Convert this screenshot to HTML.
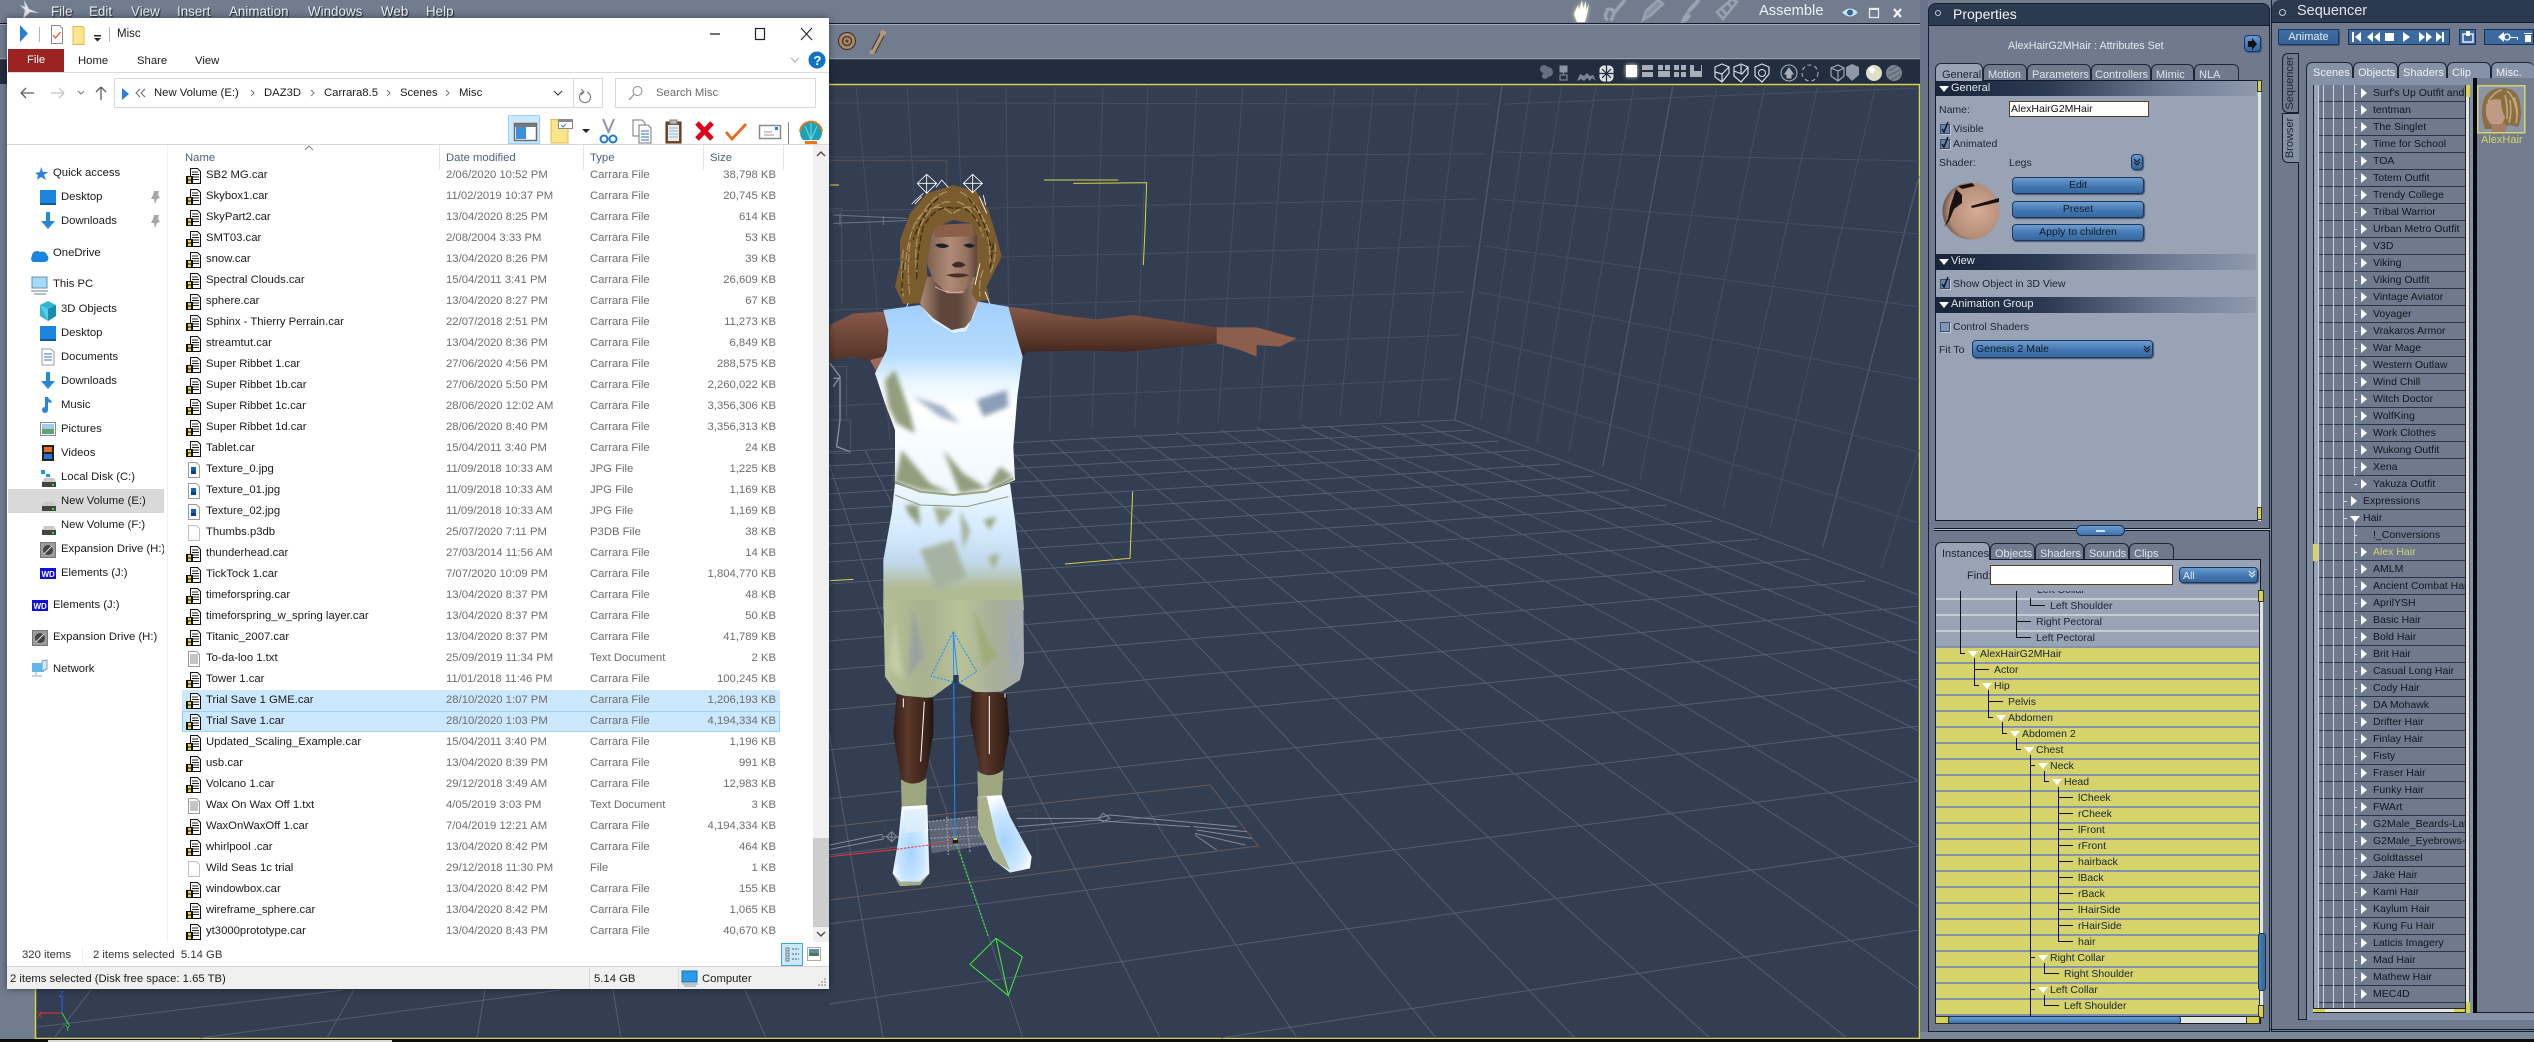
<!DOCTYPE html>
<html><head><meta charset="utf-8"><title>Carrara</title>
<style>
*{box-sizing:border-box}
html,body{margin:0;padding:0;overflow:hidden;width:2534px;height:1042px}
body{position:relative;background:#717c8f;font-family:"Liberation Sans",sans-serif;font-size:10.5px;color:#1c2431}
#root{position:absolute;left:0;top:0;width:2534px;height:1042px;overflow:hidden}
.a{position:absolute}
.t{position:absolute;white-space:nowrap;line-height:14px}
.m{color:#eef1f5;font-size:13.4px;top:5px;text-shadow:1px 1px 1px #1c2431}
.win{position:absolute;left:7px;top:18px;width:822px;height:971px;background:#fff;box-shadow:0 0 7px rgba(0,0,0,.45)}
.e{position:absolute;white-space:nowrap;line-height:14px;font-size:11.3px;color:#1a1a1a}
.h{color:#4c607a;top:151px}
.g{color:#6d6d6d}
.nav{left:61px}.top{left:53px}
.list{position:absolute;left:182px;top:165px;width:598px;height:777px;overflow:hidden}
.r{position:relative;height:21px;line-height:21px;font-size:11.3px;white-space:nowrap;color:#1a1a1a}
.r svg{position:absolute;left:4px;top:3px}
.r span{position:absolute}
.r span:nth-of-type(1){left:24px}
.r span:nth-of-type(2){left:264px;color:#6d6d6d}
.r span:nth-of-type(3){left:408px;color:#6d6d6d}
.r span:nth-of-type(4){right:4px;color:#6d6d6d}
.s{background:#cce8ff}
.sb{background:#cce8ff;box-shadow:inset 0 0 0 1px #99d1ff}
.tab{position:absolute;border:1px solid #1b2738;border-bottom:0;border-radius:6px 6px 0 0;color:#dde2ea;line-height:20px;padding-left:6px;background:#6f7a8e;font-size:11px;white-space:nowrap;overflow:hidden}
.tab.on{background:#98a3b6;color:#1c2431;z-index:2;line-height:22px}
.sec{position:absolute;left:1936px;width:320px;background:linear-gradient(90deg,#17243a,#2c3a52 35%,#6e7b92 72%,#8e99ad);color:#e4e8ee;line-height:15px;padding-left:15px;font-size:11px}
.sec:before{content:"";position:absolute;left:3px;top:5px;border:5px solid transparent;border-top:6px solid #fff;border-bottom:0}
.btn{position:absolute;background:linear-gradient(#6c9dcf,#4478b2 55%,#38679e);border:1px solid #1a3760;border-radius:4px;box-shadow:1px 1px 1px #46536a;text-align:center;color:#111a28;font-size:10.5px}
.cb{position:absolute;width:10px;height:10px;background:#6483ad;border:1px solid #3a4c68;box-shadow:1px 1px 0 #c3cad6}
.p{height:16px;border-top:2px solid #c4ccd8;background:#98a3b6;line-height:12px;white-space:nowrap;font-size:10.5px;color:#1c2431}
.y{background:#d6d36b;border-top:2px solid #8592ae}
.q{position:relative;height:17px;border-bottom:1px solid #2b3547;line-height:17px;padding-left:55px;white-space:nowrap;overflow:hidden;background:#6f7a8e;color:#10161f;font-size:10.5px}
.q:before{content:"";position:absolute;left:43px;top:3px;border:5px solid transparent;border-left:6px solid #fff;border-right:0}
.q:after{content:"";position:absolute;left:36px;top:8px;width:3px;height:1px;background:#d6dbe3}
.q.x{padding-left:45px}.q.x:before{left:33px}.q.x:after{left:26px}
.q.d:before{left:32px;top:6px;border:5px solid transparent;border-top:6px solid #fff;border-bottom:0}
.q.x.d{padding-left:45px}
.q.n:before{display:none}
.q.c{color:#d6d36b}
</style></head>
<body><div id="root">
<!-- App chrome -->
<div class="a" style="left:0;top:23px;width:1928px;height:1px;background:#121a28"></div>
<div class="a" style="left:0;top:24px;width:1928px;height:1px;background:#a3acbb"></div>
<div class="a" style="left:0;top:58px;width:1928px;height:2px;background:linear-gradient(#c1c8d3,#121a28)"></div>
<div class="a" style="left:0;top:60px;width:1920px;height:24px;background:#222d40"></div>
<svg class="a" style="left:18px;top:0" width="24" height="20"><path d="M6 0l5 9 10 4-9-1-7 7 2-9-5-5 5 2z" fill="#dfe4ea"/></svg>
<span class="t m" style="left:51px">File</span><span class="t m" style="left:89px">Edit</span><span class="t m" style="left:131px">View</span><span class="t m" style="left:177px">Insert</span><span class="t m" style="left:229px">Animation</span><span class="t m" style="left:308px">Windows</span><span class="t m" style="left:381px">Web</span><span class="t m" style="left:426px">Help</span>

<!-- Viewport and figure -->
<svg class="a" style="left:0;top:0" width="2534" height="1042" viewBox="0 0 2534 1042">
<defs>
<linearGradient id="shirt" x1="0" y1="0" x2="0" y2="1"><stop offset="0" stop-color="#a0cffb"/><stop offset=".28" stop-color="#b7dcfd"/><stop offset=".42" stop-color="#eaf6ff"/><stop offset=".55" stop-color="#fff"/><stop offset="1" stop-color="#eef7ff"/></linearGradient>
<linearGradient id="sh1" x1="0" y1="0" x2="0" y2="1"><stop offset="0" stop-color="#eef8ff"/><stop offset=".35" stop-color="#d7ecff"/><stop offset=".62" stop-color="#c2d9ec"/><stop offset=".82" stop-color="#b0bb96"/><stop offset="1" stop-color="#b1bc92"/></linearGradient>
<linearGradient id="sh2" x1="0" y1="0" x2="1" y2="0"><stop offset="0" stop-color="#b5bf95"/><stop offset=".3" stop-color="#a8b18f"/><stop offset=".55" stop-color="#b9c297"/><stop offset=".8" stop-color="#a9ae98"/><stop offset="1" stop-color="#a5acae"/></linearGradient>
<linearGradient id="arm" x1="0" y1="0" x2="0" y2="1"><stop offset="0" stop-color="#87594a"/><stop offset=".6" stop-color="#5f3b2d"/><stop offset="1" stop-color="#3c2219"/></linearGradient>
<linearGradient id="leg" x1="0" y1="0" x2="1" y2="0"><stop offset="0" stop-color="#2f1b14"/><stop offset=".35" stop-color="#5a382a"/><stop offset=".8" stop-color="#3c2419"/><stop offset="1" stop-color="#221410"/></linearGradient>
<linearGradient id="neck" x1="0" y1="0" x2="1" y2="0"><stop offset="0" stop-color="#b08c78"/><stop offset=".35" stop-color="#5d463c"/><stop offset=".65" stop-color="#5f473c"/><stop offset="1" stop-color="#a88876"/></linearGradient>
<linearGradient id="face" x1="0" y1="0" x2="1" y2="0"><stop offset="0" stop-color="#7d5e50"/><stop offset=".45" stop-color="#b08c78"/><stop offset=".8" stop-color="#94705e"/><stop offset="1" stop-color="#5f4238"/></linearGradient>
<radialGradient id="shoe" cx=".5" cy=".6" r=".6"><stop offset="0" stop-color="#a5d4fd"/><stop offset=".6" stop-color="#cbe7ff"/><stop offset="1" stop-color="#fff"/></radialGradient>
<filter id="b4" x="-50%" y="-50%" width="200%" height="200%"><feGaussianBlur stdDeviation="14"/></filter>
<filter id="b2" x="-50%" y="-50%" width="200%" height="200%"><feGaussianBlur stdDeviation="7"/></filter>
</defs>
<rect x="35" y="84" width="1885" height="956" fill="#333e52"/>
<path d="M35 84.500H1919.500V1038.500H35.500V84.500" fill="none" stroke="#d8d44a" stroke-width="1.500"/>
<!-- walls -->
<g stroke="#434e62" stroke-width="1" fill="none">
<path d="M890 440L856 85M930 438L907 85M970 436L957 85M1010 434L1006 85M1050 432L1055 85M1092 428L1103 85M1135 427L1148 85M1178 425L1197 85M1218 423L1243 85M1259 422L1287 85M1300 420L1335 85M1340 417L1374 85M1380 416L1417 85M1418 417L1459 85"/>
<path d="M1481 420L1531 85M1508 432L1562 85M1537 442L1596 85M1569 452L1634 85M1640 480L1717 85M1680 494L1765 85M1723 509L1818 85M1770 528L1876 85M1881 568L1919 450"/>
<path d="M829 103L1491 104M829 157L1484 154M829 211L1478 199M829 261L1471 246M829 310L1465 292M829 358L1459 335M829 406L1453 379"/>
<path d="M1505 104L1919 88M1495 152L1919 161M1491 199L1919 234M1484 246L1919 307M1478 292L1919 380M1470 336L1919 452M1465 379L1919 523"/>
</g>
<path d="M1455 420L1502 85M1603 466L1673 85M1823 547L1919 176" stroke="#4d596e" stroke-width="1.300" fill="none"/>
<!-- floor -->
<g stroke="#535e73" stroke-width="1" fill="none">
<path d="M1221 1038L1919 930M829 1004L1919 846M829 924L1919 781M829 855L1919 726M829 799L1919 679M829 750L1919 639M829 710L1919 606M829 670L1865 581M829 641L1810 559M829 612L1758 539M829 584L1712 521M829 562L1667 505M829 544L1629 490M829 526L1593 476M829 510L1560 464M829 494L1529 450M829 479L1499 441M829 466L1473 430M829 452L1455 420"/>
<path d="M1455 420L1919 595M1421 424L1919 624M1382 426L1919 654M1328 426L1919 688M1302 425L1919 731M1256 427L1919 781M1221 430L1919 846M1176 432L1919 907M1136 435L1919 989M1091 437L1847 1038M1050 440L1710 1038M1003 443L1575 1038M955 446L1436 1038M910 448L1297 1038M865 450L1160 1038M825 452L1023 1038M780 455L883 1038"/>
<path d="M91 990L54 1038M354 990L327 1038M485 990L477 1038M613 990L621 1038M745 990L766 1038M37 1027L343 990M200 1038L560 990"/>
</g>
<!-- axes bottom-left -->
<path d="M62 997V1013" stroke="#2266ff" fill="none"/><path d="M40 1013H62" stroke="#e33" fill="none"/><path d="M62 1013L69 1025" stroke="#3d3" fill="none"/>
<text x="59" y="997" font-size="8" fill="#2266ff" font-family="Liberation Sans">Z</text><text x="37" y="1018" font-size="8" fill="#e33" font-family="Liberation Sans">X</text><text x="65" y="1031" font-size="8" fill="#3d3" font-family="Liberation Sans">Y</text>

<!-- Upper figure, coords from crop 820,130 @3x -->
<g transform="translate(820 130) scale(.33333)">
<g fill="none" stroke="#d8d44a" stroke-width="3"><path d="M672 150L895 150"/><path d="M760 160L980 158L975 300L970 405"/><path d="M938 1085L930 1285L735 1302"/><path d="M30 165H57"/><path d="M30 1352L100 1348"/></g>
<path d="M30 92H380V170" fill="none" stroke="#5a4a4e" stroke-width="3"/>
<g fill="none" stroke="#6d7688" stroke-width="3"><path d="M40 255L260 265M40 280L260 272M60 250V285M190 258V285"/><path d="M30 235H65V520M30 710H80V870M30 870H92V970H30" stroke="#4a5366"/><path d="M30 700L60 740L40 770M40 745H60V870L50 950L90 965" stroke="#8a91a0" stroke-width="4"/></g>
<path d="M30 585L100 550L200 545L205 630L190 680L180 745L150 690L100 680L30 690Z" fill="url(#arm)"/>
<path d="M150 690L180 745L195 715L190 680Z" fill="#9b6b57"/>
<path d="M565 530L640 540L720 555L830 568L940 555L1190 592L1310 592L1430 625L1380 650L1310 645L1310 680L1260 660L1190 640L1090 650L920 665L800 662L620 665L608 680L590 620Z" fill="url(#arm)"/>
<path d="M1190 592L1310 592L1430 625L1380 650L1310 645L1310 680L1260 660L1190 640Z" fill="#8c5e4b"/>
<path d="M300 520L330 570L400 607L440 602L478 515L465 440L320 440Z" fill="url(#neck)"/>
<path d="M333 320L350 285L455 280L472 320L472 420L430 490L380 490L340 450L320 400Z" fill="url(#face)"/>
<path d="M335 285L455 280L465 318L345 322Z" fill="#8a5f47"/>
<path d="M345 345Q365 335 388 348Q365 362 345 345ZM430 345Q450 335 465 348Q448 360 430 345Z" fill="#1e2227"/>
<path d="M395 405Q415 385 437 405L425 412H405Z" fill="#3f2a24"/><path d="M378 435Q415 425 448 435Q415 450 378 435Z" fill="#4a2e26"/>
<path d="M400 165L470 185L505 240L530 320L545 380L520 430L500 470L510 510L470 515L455 490L470 420L472 320L455 280L400 270L350 290L333 320L320 400L322 440L300 520L250 522L225 470L240 400L240 330L270 250L320 190Z" fill="#7a5c2e"/>
<g fill="none" stroke="#ab905c" stroke-width="4" stroke-dasharray="26 6"><path d="M395 250Q340 205 290 270Q260 330 255 420"/><path d="M400 250Q460 205 490 270Q510 330 510 400"/><path d="M380 185Q330 200 290 280"/><path d="M420 185Q470 210 510 310"/><path d="M270 340Q260 420 270 500"/><path d="M490 420Q475 450 480 500"/><path d="M390 215Q340 215 305 280Q280 340 290 430"/><path d="M410 215Q460 225 490 320"/><path d="M250 360Q240 430 250 500"/><path d="M525 340Q530 390 510 430"/></g>
<g fill="none" stroke="#3f2c10" stroke-width="4" stroke-dasharray="20 8"><path d="M400 235Q350 220 310 290Q290 370 290 450"/><path d="M405 235Q450 225 480 290"/><path d="M250 400L245 490"/><path d="M520 340L510 420"/><path d="M355 205Q310 240 280 330"/><path d="M445 205Q490 250 515 360"/></g>
<g fill="none" stroke="#fff" stroke-width="2.500"><path d="M320 133L350 160L320 190L292 160ZM320 133V190M292 160H350"/><path d="M458 133L487 160L458 188L430 160ZM458 133V188M430 160H487"/><path d="M365 150L385 172M365 150L348 172"/><path d="M275 222L310 190M285 222L305 200"/><path d="M478 200L500 250M490 195L497 225"/><path d="M255 540L265 520M495 485L513 530"/><path d="M345 470Q385 495 430 485" stroke="#e5bba6"/><path d="M465 465L480 400"/></g>
<path d="M190 540L300 525L340 575L400 610L440 605L475 515L565 530L590 620L608 680L592 800L580 950L585 1050L500 1085L400 1095L300 1085L225 1055L225 900L195 820L165 730L200 660L205 600Z" fill="url(#shirt)"/>
<path d="M300 525L340 575L400 610L440 605L475 515L462 560L435 592L395 600L340 565Z" fill="#d9eeff"/>
<g filter="url(#b2)"><path d="M470 810L560 780L565 830L490 860Z" fill="#8c9eb8"/><path d="M280 800L370 830L420 880L360 860Z" fill="#a2b2c6"/></g>
<g filter="url(#b2)" fill="#939e7e"><path d="M195 750L225 720L270 850L285 910L230 880L205 830Z"/><path d="M245 960L330 1060L395 1090L300 1080L225 1055Z"/><path d="M370 960L430 1030L500 1075L420 1090Z"/><path d="M540 1010L580 1040L540 1065L500 1075Z"/></g>
<path d="M225 1060L300 1087L400 1095L500 1085L570 1060L585 1170L605 1340L612 1440L190 1440L190 1290L215 1150Z" fill="url(#sh1)"/>
<g filter="url(#b2)"><path d="M255 1125L295 1125L300 1190L265 1150Z" fill="#8e9a78"/><path d="M340 1130L400 1140L360 1190Z" fill="#a1ad90"/><path d="M420 1140L450 1200L430 1260Z" fill="#a4b19a"/><path d="M300 1260L400 1230L440 1340L350 1380Z" fill="#a7b3a1"/><path d="M490 1170L530 1160L510 1200Z" fill="#97a580"/><path d="M505 1280L540 1270L520 1320Z" fill="#a2b08a"/></g>
<path d="M225 1095L300 1125L440 1130L565 1100" fill="none" stroke="#8e9a78" stroke-width="3"/>
<path d="M225 1055L300 1085L400 1095L500 1085L580 1045" fill="none" stroke="#9aa57f" stroke-width="6"/>
</g>

<!-- Lower figure, coords from crop 820,600 @3x -->
<g transform="translate(820 600) scale(.33333)">
<g fill="none" stroke="#6a5a5c" stroke-width="3"><path d="M30 680L1170 555L1315 738L30 900"/><path d="M190 660L650 630L655 810L235 865Z" stroke="#3d4656"/></g>
<g fill="none" stroke="#848b99" stroke-width="3"><path d="M30 735L185 703L190 717L30 748"/><path d="M190 710L240 712M215 695V725M200 710L215 695L230 710L215 725Z"/><path d="M590 655L830 655L870 645L1250 680M595 680L830 660L875 665L1110 680"/><path d="M835 655L850 640L870 655L850 665Z"/><path d="M1120 680L1280 695M1130 690L1295 715M1125 700L1275 735M1125 705L1190 750"/></g>
<path d="M325 665L470 650L500 735L335 760Z" fill="#7d8391" opacity=".55"/>
<g fill="none" stroke="#8f96a4" stroke-width="4" stroke-dasharray="7 4"><path d="M325 665L470 650M320 690L480 680M330 715L500 705M335 740L500 730M380 650L385 765M440 650L450 760"/></g>
<path d="M190 0L610 0L612 190L600 240L545 275L470 278L420 250L405 225L395 250L340 290L290 300L230 280L195 230Z" fill="url(#sh2)"/>
<g filter="url(#b2)"><path d="M280 20L310 170L265 230Z" fill="#98a29f"/><path d="M460 30L530 170L490 200Z" fill="#a0ab78"/><path d="M565 20L600 160L575 240Z" fill="#9ca8b8"/><path d="M225 60L250 240L205 200Z" fill="#c3cba7"/></g>
<path d="M230 285L340 295L340 400L320 520L300 555L245 550L220 400Z" fill="url(#leg)"/>
<path d="M455 275L560 280L568 400L550 510L520 530L480 515L450 360Z" fill="url(#leg)"/>
<path d="M243 538Q280 565 320 535L318 625L245 625Z" fill="#9da67f"/><path d="M472 513Q510 540 550 510L545 595L475 605Z" fill="#9da67f"/>
<path d="M245 620L322 615L328 820L300 855L240 858L218 820L235 720Z" fill="url(#shoe)"/>
<path d="M472 590L545 585L570 650L635 770L630 805L570 818L520 780L475 690Z" fill="url(#shoe)"/>
<path d="M472 590L500 590L530 720L570 810L525 785L475 690Z" fill="#a8b08a"/>
<path d="M250 630L320 625L318 690L255 700Z" fill="#dfeef9" opacity=".8"/>
<path d="M218 820L240 858L300 855L328 820L300 845L240 845Z" fill="#a5ad8c"/>
<g fill="none" stroke="#fff" stroke-width="3"><path d="M250 295V322M313 305L302 485M508 288V462M555 280V293"/></g>
<g fill="none" stroke="#1e90ff" stroke-width="3"><path d="M400 95L405 720"/><path d="M400 95L470 215L415 250L333 228Z" stroke-dasharray="7 4"/><path d="M400 95L415 250"/></g>
<path d="M400 225H416V250H400Z" fill="#2b3a50"/>
<path d="M30 770L230 748" stroke="#f03030" stroke-width="3"/><path d="M230 748L400 725" stroke="#f03030" stroke-width="3" stroke-dasharray="7 4"/>
<path d="M405 720L505 1010" stroke="#3cf03c" stroke-width="3" stroke-dasharray="7 4"/>
<g fill="none" stroke="#3cf03c" stroke-width="3"><path d="M528 1015L607 1070L565 1187L450 1093Z"/><path d="M528 1015L565 1187"/></g>
<rect x="398" y="714" width="16" height="16" fill="#1c1c18"/><rect x="400" y="714" width="12" height="6" fill="#d8c84a"/>
</g>
</svg>

<!-- Toolbar icons -->
<svg class="a" style="left:838px;top:28px" width="54" height="26"><circle cx="9" cy="13" r="8.500" fill="#a88a6c" stroke="#3c2e22"/><circle cx="9" cy="13" r="4.500" fill="none" stroke="#4d3b2b" stroke-width="1.500"/><circle cx="9" cy="13" r="1.500" fill="#4d3b2b"/><path d="M35 24L45 5" stroke="#3c2e22" stroke-width="5.500"/><path d="M35 24L45 5" stroke="#b49878" stroke-width="3.500"/><circle cx="45" cy="5" r="3" fill="#b49878"/><circle cx="34" cy="24" r="2.500" fill="#b49878"/></svg>
<svg class="a" style="left:1570px;top:0" width="175" height="23" fill="none">
<path d="M4 14l4-9 1 5 3-10 1 9 3-8 0 9 3-6-2 10-2 8H7z" fill="#fff" style="filter:drop-shadow(0 0 2px #eef09a)"/>
<path d="M36 10c5-2 8 0 8 3l11-13M38 20c-4-2-3-7 0-9M44 13l-3 8" stroke="#98a2b0" stroke-width="3.500"/>
<path d="M73 20l3-9L88 0l5 4-12 11z" fill="#8892a3" stroke="#98a2b0" stroke-width="2.500"/>
<path d="M112 22l2-5 3-4 3 3-3 4z" fill="#98a2b0" stroke="#98a2b0" stroke-width="2"/><path d="M118 12L129 0" stroke="#98a2b0" stroke-width="4"/>
<path d="M147 12l6 7 14-17-5-3zM151 8l6 7M157 2l6 7" stroke="#98a2b0" stroke-width="2.500"/>
</svg>
<span class="t" style="left:1759px;top:4px;color:#eef1f5;font-size:14.700px">Assemble</span>
<svg class="a" style="left:1840px;top:4px" width="68" height="18" fill="none"><path d="M3 8.500q7-7 14 0q-7 7-14 0z" fill="#bfe0f8" stroke="#cfe8fa"/><circle cx="10" cy="8.500" r="3" fill="#37658f"/><rect x="29.500" y="4.500" width="9" height="9" stroke="#e6e9ee" stroke-width="1.300"/><rect x="29" y="4" width="10" height="2" fill="#e6e9ee"/><path d="M54 5l7 8M61 5l-7 8" stroke="#f2f4f6" stroke-width="2.200"/></svg>
<svg class="a" style="left:1536px;top:60px" width="375" height="24" fill="none">
<g fill="#667084"><circle cx="8" cy="9" r="4"/><circle cx="12" cy="12" r="5"/><circle cx="9" cy="16" r="3"/></g>
<path d="M24 6h7v6h-7zM24 15h7v5h-7zM27.500 12v3" stroke="#8c95a4" fill="#8c95a4"/><path d="M24.500 15.500h6v4h-6z" fill="#222d40"/>
<path d="M41 21l3-7 4 2 3-3 3 3 3-1 3 6-4-3-2 3-3-3-3 3-3-2z" fill="#7a8495"/>
<rect x="64" y="6" width="13" height="15" rx="4" fill="#d9dde3" stroke="#eee"/><path d="M70.500 5v17M63 13.500h15M66 9l9 9M75 9l-9 9" stroke="#222d40" stroke-width="1.200"/>
<rect x="90" y="5" width="11" height="12" fill="#fff" style="filter:drop-shadow(0 0 2px #f4f5c0)"/>
<g fill="#a7aeba"><rect x="106" y="5" width="11" height="5"/><rect x="106" y="12" width="11" height="5"/><rect x="122" y="5" width="5" height="5"/><rect x="129" y="5" width="5" height="5"/><rect x="122" y="11" width="12" height="6"/><rect x="138" y="5" width="5" height="5"/><rect x="145" y="5" width="5" height="5"/><rect x="138" y="12" width="5" height="5"/><rect x="145" y="12" width="5" height="5"/><path d="M154 5h4v6h7V5h1v12h-12z"/></g>
<g stroke="#d7dbe1" stroke-width="1.200"><path d="M179 7l7-3 7 3v6l-7 9-7-5zM179 12l7 2 7-7M186 14v8"/><path d="M198 7l7-3 7 3v7l-7 8-7-6zM198 11l8 3 6-7M205 5v9"/><path d="M219 7l7-3 7 3v7l-7 8-7-6z"/><circle cx="226" cy="13" r="3.500" stroke-width="1"/></g>
<g stroke="#a8afba" stroke-width="1.100"><circle cx="253" cy="13" r="8"/><path d="M253 8l4 6h-2v4h-4v-4h-2z" fill="#a8afba"/><circle cx="274" cy="13" r="8" stroke-dasharray="4 3"/><path d="M295 8l7-3 6 3v8l-6 5-7-5zM295 8l7 3 6-3M302 11v9"/></g>
<path d="M310 7l6-3 7 3v8l-7 6-6-6z" fill="#8f98a6"/><circle cx="338" cy="13" r="8" fill="#dedfc8"/><circle cx="336" cy="10" r="3" fill="#fff"/><circle cx="358" cy="13" r="8" fill="#7d8592"/><path d="M352 16l12-6M353 11l8-5M355 20l10-6" stroke="#5b6472" stroke-width="1.200"/>
</svg>

<!-- Explorer window -->
<div class="win"></div>
<svg class="a" style="left:7px;top:18px" width="822" height="31" fill="none">
<path d="M13 7l8 8.500-8 8.500z" fill="#2a7fd4"/><path d="M32.500 9v15" stroke="#b5b5b5"/>
<path d="M44.500 7.500h8l3 3v15h-11z" fill="#fff" stroke="#8a8a8a"/><path d="M46 17l2.500 3 5-6" stroke="#e25a1c" stroke-width="1.300"/>
<path d="M66 8.500h9q2 0 2 2v16h-11z" fill="#ffe58d" stroke="#e2b94a"/>
<path d="M87 17h7v1.500h-7zM87 20l3.500 3.500L94 20z" fill="#222"/><path d="M102.500 9v15" stroke="#b5b5b5"/>
<path d="M703 16h10" stroke="#222" stroke-width="1.300"/><rect x="748.500" y="10.500" width="9" height="11" stroke="#222" stroke-width="1.200"/><path d="M794 10l11 12M805 10l-11 12" stroke="#222" stroke-width="1.100"/>
</svg>
<span class="e" style="left:117px;top:27px;font-size:11.500px">Misc</span>
<div class="a" style="left:8px;top:49px;width:56px;height:23px;background:#9b2423;color:#fff;font-size:11.300px;line-height:23px;padding-left:19px">File</div>
<span class="e" style="left:78px;top:54px">Home</span><span class="e" style="left:137px;top:54px">Share</span><span class="e" style="left:195px;top:54px">View</span>
<div class="a" style="left:7px;top:72px;width:822px;height:1px;background:#dadbdc"></div>
<svg class="a" style="left:790px;top:50px" width="38" height="20" fill="none"><path d="M1 8l4 4 4-4" stroke="#a9a9a9"/><circle cx="27" cy="10" r="8.500" fill="#1273c4"/><text x="23.500" y="15" font-size="13" font-weight="bold" fill="#fff" font-family="Liberation Sans">?</text></svg>
<!-- nav arrows -->
<svg class="a" style="left:18px;top:82px" width="96" height="22" fill="none"><path d="M3 11h13M3 11l5-5M3 11l5 5" stroke="#5e5e5e" stroke-width="1.300"/><path d="M33 11h13M46 11l-5-5M46 11l-5 5" stroke="#c4c4c4" stroke-width="1.300"/><path d="M60 9l3 3 3-3" stroke="#777"/><path d="M83 18V5M83 5l-5 5M83 5l5 5" stroke="#5e5e5e" stroke-width="1.300"/></svg>
<div class="a" style="left:114px;top:78px;width:489px;height:30px;border:1px solid #d9d9d9"></div>
<div class="a" style="left:573px;top:78px;width:1px;height:30px;background:#d9d9d9"></div>
<svg class="a" style="left:118px;top:80px" width="480" height="26" fill="none">
<path d="M4 8l7 6-7 6z" fill="#2a7fd4"/><path d="M22 9l-4 4 4 4M27 9l-4 4 4 4" stroke="#666"/>
<path d="M133 10l3 3-3 3M193 10l3 3-3 3M269 10l3 3-3 3M328 10l3 3-3 3" stroke="#777"/>
<path d="M436 11l4 4 4-4" stroke="#444" stroke-width="1.200"/><path d="M475 9a5.500 5.500 0 1 1-4 0M469 6l3 3-3 3" stroke="#777" stroke-width="1.100" transform="translate(-6 3)"/>
</svg>
<span class="e" style="left:154px;top:86px">New Volume (E:)</span><span class="e" style="left:264px;top:86px">DAZ3D</span><span class="e" style="left:324px;top:86px">Carrara8.5</span><span class="e" style="left:400px;top:86px">Scenes</span><span class="e" style="left:459px;top:86px">Misc</span>
<div class="a" style="left:615px;top:78px;width:201px;height:30px;border:1px solid #d9d9d9"></div>
<svg class="a" style="left:628px;top:85px" width="16" height="16" fill="none"><circle cx="9.500" cy="6" r="4.500" stroke="#8a8a8a"/><path d="M6 9.500L1 15" stroke="#8a8a8a" stroke-width="1.200"/></svg>
<span class="e g" style="left:656px;top:86px">Search Misc</span>
<!-- toolbar -->
<div class="a" style="left:508px;top:115px;width:32px;height:29px;background:#cce8ff;border:1px solid #99d1ff"></div>
<svg class="a" style="left:510px;top:115px" width="315" height="30" fill="none">
<rect x="4.500" y="8.500" width="22" height="17" fill="#fff" stroke="#6c6c6c" stroke-width="1.500"/><rect x="5" y="9" width="21" height="3" fill="#7a7a7a"/><rect x="6" y="12" width="10" height="12" fill="#3b8fdb"/>
<path d="M41 4.500h6l2 2v21.500h-8z" fill="#fde58c" stroke="#e0b94a"/><path d="M47 10h11v18H41" fill="#fde58c" stroke="#e0b94a"/><rect x="48.500" y="4.500" width="14" height="9" fill="#fff" stroke="#8a8a8a"/><rect x="49" y="5" width="13" height="2" fill="#888"/><path d="M51 10l2 2 3-3" stroke="#2a7fd4"/>
<path d="M72 14h8l-4 4z" fill="#222"/>
<path d="M93 4l6 14M104 4l-6 14" stroke="#8f97a3" stroke-width="2"/><circle cx="94" cy="24" r="3.500" stroke="#1a7ccc" stroke-width="2"/><circle cx="103" cy="24" r="3.500" stroke="#1a7ccc" stroke-width="2"/>
<path d="M123 5h9l3 3v13h-12z" fill="#fff" stroke="#777"/><path d="M129 10h9l3 3v15h-12z" fill="#fff" stroke="#777"/><path d="M131 16h8M131 19h8M131 22h8M131 25h8" stroke="#2f6fc2"/>
<rect x="156" y="7" width="15" height="21" fill="#7b4a28" stroke="#5b3318"/><rect x="158" y="10" width="11" height="16" fill="#e5edf3"/><rect x="160" y="5" width="7" height="4" fill="#bbb" stroke="#777"/><path d="M159 13h9M159 16h9M159 19h9M159 22h9" stroke="#9bb6cf"/>
<path d="M187 8l15 16M202 8l-15 16" stroke="#e0001a" stroke-width="5"/>
<path d="M216 17l6 7 14-15" stroke="#f0661a" stroke-width="2.800"/>
<rect x="249.500" y="10.500" width="21" height="13" fill="#fff" stroke="#8a8a8a" stroke-width="1.500"/><rect x="265" y="12" width="3" height="3" fill="#2a7fd4"/><path d="M254 17h8M254 20h10" stroke="#999"/>
<path d="M278.500 7v22" stroke="#8a8a8a"/>
<path d="M290 17a11 10.500 0 0 1 22 0q0 5-3 8h-16q-3-3-3-8z" fill="#1ea1b5"/><path d="M290 17a11 10.500 0 0 1 22 0" stroke="#e8781e" stroke-width="1.800"/><path d="M295 26h12v3h-12z" fill="#e8781e"/><path d="M301 25l-6-14M301 25V8M301 25l6-14" stroke="#6fd6e2"/>
</svg>
<div class="a" style="left:7px;top:144px;width:822px;height:1px;background:#d9d9d9"></div>
<!-- Nav pane -->
<div class="a" style="left:167px;top:145px;width:1px;height:797px;background:#f0f0f0"></div>
<div class="a" style="left:8px;top:489px;width:156px;height:24px;background:#d9d9d9"></div>
<span class="e top" style="top:166px">Quick access</span><span class="e nav" style="top:190px">Desktop</span><span class="e nav" style="top:214px">Downloads</span><span class="e top" style="top:246px">OneDrive</span><span class="e top" style="top:277px">This PC</span><span class="e nav" style="top:302px">3D Objects</span><span class="e nav" style="top:326px">Desktop</span><span class="e nav" style="top:350px">Documents</span><span class="e nav" style="top:374px">Downloads</span><span class="e nav" style="top:398px">Music</span><span class="e nav" style="top:422px">Pictures</span><span class="e nav" style="top:446px">Videos</span><span class="e nav" style="top:470px">Local Disk (C:)</span><span class="e nav" style="top:494px">New Volume (E:)</span><span class="e nav" style="top:518px">New Volume (F:)</span>
<div class="a" style="left:61px;top:542px;width:103px;height:14px;overflow:hidden"><span class="e" style="left:0;top:0">Expansion Drive (H:)</span></div>
<span class="e nav" style="top:566px">Elements (J:)</span><span class="e top" style="top:598px">Elements (J:)</span><span class="e top" style="top:630px">Expansion Drive (H:)</span><span class="e top" style="top:662px">Network</span>
<svg class="a" style="left:28px;top:160px" width="140" height="520" fill="none">
<path d="M13 7l2 5h5l-4 3 2 5-5-3-4 3 1-5-3-2 5-1z" fill="#2a85d8"/>
<rect x="12" y="30" width="16" height="13" fill="#1a84de"/><rect x="12" y="43" width="16" height="2" fill="#0b5aa4"/>
<path d="M18 52h4v9h5l-7 8-7-8h5z" fill="#2a85d8"/>
<path d="M4 96a5 5 0 0 1 8-4 5 5 0 0 1 7 3 4 4 0 0 1-2 7H5a4 4 0 0 1-1-6z" fill="#1a84de"/>
<rect x="4" y="117" width="15" height="11" fill="#9fdcf7" stroke="#6b8fa6"/><path d="M3 131h17M6 134h12" stroke="#9aa9b3" stroke-width="1.500"/>
<path d="M20 141l8 4v11l-8 5-8-5v-11z" fill="#33b5d3"/><path d="M12 145l8 4 8-4v11l-8 5z" fill="#58d0e4"/><path d="M20 149v12l8-5v-11z" fill="#1b8bb0"/>
<rect x="12" y="166" width="16" height="13" fill="#1a84de"/><rect x="12" y="179" width="16" height="2" fill="#0b5aa4"/>
<path d="M14 189h9l3 3v13H14z" fill="#fff" stroke="#9a9a9a"/><path d="M16 194h8M16 197h8M16 200h8" stroke="#2f6fc2"/>
<path d="M18 212h4v9h5l-7 8-7-8h5z" fill="#2a85d8"/>
<path d="M17 247v-10h3q1 3 4 4l-1 2-3-1v8a3 3 0 1 1-3-3z" fill="#2a85d8"/>
<rect x="12.500" y="262.500" width="15" height="13" fill="#fff" stroke="#8a8a8a"/><rect x="14" y="264" width="12" height="5" fill="#9fcde8"/><path d="M14 269h12v5H14z" fill="#5f9f7a"/>
<rect x="14" y="285" width="12" height="16" fill="#222"/><rect x="16" y="287" width="8" height="5" fill="#e0702a"/><rect x="16" y="294" width="8" height="5" fill="#2a6fd0"/>
<rect x="13" y="310" width="4" height="4" fill="#1e9be0"/><rect x="18" y="314" width="4" height="3" fill="#1e9be0"/><path d="M16 318h10l2 4v4H14v-4z" fill="#c9c9c9"/><rect x="14" y="322" width="14" height="5" fill="#444"/><rect x="24" y="324" width="2" height="2" fill="#3d3"/>
<path d="M16 342h10l2 4v4H14v-4z" fill="#c9c9c9"/><rect x="14" y="346" width="14" height="5" fill="#444"/><rect x="24" y="348" width="2" height="2" fill="#3d3"/>
<path d="M16 366h10l2 4v4H14v-4z" fill="#c9c9c9"/><rect x="14" y="370" width="14" height="5" fill="#444"/><rect x="24" y="372" width="2" height="2" fill="#3d3"/>
<rect x="12.500" y="382.500" width="15" height="15" fill="#9c9c9c" stroke="#777"/><circle cx="20" cy="390" r="5" fill="#444"/><path d="M16 394l8-8" stroke="#ddd"/>
<rect x="12" y="408" width="16" height="11" fill="#0d0de0"/><text x="13.500" y="417" font-size="8" font-weight="bold" fill="#fff" font-family="Liberation Sans">WD</text>
<rect x="4" y="440" width="16" height="11" fill="#0d0de0"/><text x="5.500" y="449" font-size="8" font-weight="bold" fill="#fff" font-family="Liberation Sans">WD</text>
<rect x="4.500" y="470.500" width="15" height="15" fill="#9c9c9c" stroke="#777"/><circle cx="12" cy="478" r="5" fill="#444"/><path d="M8 482l8-8" stroke="#ddd"/>
<rect x="4" y="503" width="12" height="9" fill="#5fb8ec"/><path d="M8 512v3M4 516h10" stroke="#9aa9b3"/><path d="M14 501l5-1v9l-5 2z" fill="#cfe8f6" stroke="#7fa1b5"/>
</svg>
<svg class="a" style="left:150px;top:189px" width="12" height="42" fill="#a6a6a6"><path d="M4 2h5l-1 4 2 3-3 1-2 5-1-5H1l2-4z"/><path d="M4 26h5l-1 4 2 3-3 1-2 5-1-5H1l2-4z"/></svg>
<!-- Column headers -->
<svg class="a" style="left:304px;top:145px" width="10" height="6" fill="none"><path d="M1 5l4-4 4 4" stroke="#888"/></svg>
<span class="e h" style="left:185px">Name</span><span class="e h" style="left:446px">Date modified</span><span class="e h" style="left:590px">Type</span><span class="e h" style="left:710px">Size</span>
<div class="a" style="left:439px;top:145px;width:1px;height:25px;background:#e5e5e5"></div><div class="a" style="left:583px;top:145px;width:1px;height:25px;background:#e5e5e5"></div><div class="a" style="left:703px;top:145px;width:1px;height:25px;background:#e5e5e5"></div><div class="a" style="left:783px;top:145px;width:1px;height:25px;background:#e5e5e5"></div>
<!-- Symbols -->
<svg width="0" height="0" style="position:absolute;left:0;top:0"><defs>
<symbol id="car" viewBox="0 0 16 16"><path d="M4.500.500h7l3 3v12h-10z" fill="#fff" stroke="#111"/><path d="M6 4h6M6 6.500h7M6 9h7M6 11.500h7" stroke="#222"/><rect x="0" y="8" width="7" height="8" fill="#111"/><path d="M2 9h3v6H2z" fill="#e8d84a"/><path d="M2 12h3" stroke="#111"/></symbol>
<symbol id="jpg" viewBox="0 0 16 16"><path d="M2.500.500h8l3 3v12h-11z" fill="#fff" stroke="#9a9a9a"/><rect x="5" y="5" width="5" height="7" fill="#0f62b8"/><rect x="5" y="9" width="5" height="3" fill="#0b3e8a"/></symbol>
<symbol id="txt" viewBox="0 0 16 16"><path d="M2.500.500h8l3 3v12h-11z" fill="#fff" stroke="#9a9a9a"/><path d="M4 4h8M4 6h8M4 8h8M4 10h8M4 12h8" stroke="#8a8a8a"/></symbol>
<symbol id="bl" viewBox="0 0 16 16"><path d="M2.500.500h8l3 3v12h-11z" fill="#fff" stroke="#c0c0c0"/></symbol>
</defs></svg>
<div class="list">
<div class="r"><svg width="16" height="16"><use href="#car"/></svg><span>SB2 MG.car</span><span>2/06/2020 10:52 PM</span><span>Carrara File</span><span>38,798 KB</span></div>
<div class="r"><svg width="16" height="16"><use href="#car"/></svg><span>Skybox1.car</span><span>11/02/2019 10:37 PM</span><span>Carrara File</span><span>20,745 KB</span></div>
<div class="r"><svg width="16" height="16"><use href="#car"/></svg><span>SkyPart2.car</span><span>13/04/2020 8:25 PM</span><span>Carrara File</span><span>614 KB</span></div>
<div class="r"><svg width="16" height="16"><use href="#car"/></svg><span>SMT03.car</span><span>2/08/2004 3:33 PM</span><span>Carrara File</span><span>53 KB</span></div>
<div class="r"><svg width="16" height="16"><use href="#car"/></svg><span>snow.car</span><span>13/04/2020 8:26 PM</span><span>Carrara File</span><span>39 KB</span></div>
<div class="r"><svg width="16" height="16"><use href="#car"/></svg><span>Spectral Clouds.car</span><span>15/04/2011 3:41 PM</span><span>Carrara File</span><span>26,609 KB</span></div>
<div class="r"><svg width="16" height="16"><use href="#car"/></svg><span>sphere.car</span><span>13/04/2020 8:27 PM</span><span>Carrara File</span><span>67 KB</span></div>
<div class="r"><svg width="16" height="16"><use href="#car"/></svg><span>Sphinx - Thierry Perrain.car</span><span>22/07/2018 2:51 PM</span><span>Carrara File</span><span>11,273 KB</span></div>
<div class="r"><svg width="16" height="16"><use href="#car"/></svg><span>streamtut.car</span><span>13/04/2020 8:36 PM</span><span>Carrara File</span><span>6,849 KB</span></div>
<div class="r"><svg width="16" height="16"><use href="#car"/></svg><span>Super Ribbet 1.car</span><span>27/06/2020 4:56 PM</span><span>Carrara File</span><span>288,575 KB</span></div>
<div class="r"><svg width="16" height="16"><use href="#car"/></svg><span>Super Ribbet 1b.car</span><span>27/06/2020 5:50 PM</span><span>Carrara File</span><span>2,260,022 KB</span></div>
<div class="r"><svg width="16" height="16"><use href="#car"/></svg><span>Super Ribbet 1c.car</span><span>28/06/2020 12:02 AM</span><span>Carrara File</span><span>3,356,306 KB</span></div>
<div class="r"><svg width="16" height="16"><use href="#car"/></svg><span>Super Ribbet 1d.car</span><span>28/06/2020 8:40 PM</span><span>Carrara File</span><span>3,356,313 KB</span></div>
<div class="r"><svg width="16" height="16"><use href="#car"/></svg><span>Tablet.car</span><span>15/04/2011 3:40 PM</span><span>Carrara File</span><span>24 KB</span></div>
<div class="r"><svg width="16" height="16"><use href="#jpg"/></svg><span>Texture_0.jpg</span><span>11/09/2018 10:33 AM</span><span>JPG File</span><span>1,225 KB</span></div>
<div class="r"><svg width="16" height="16"><use href="#jpg"/></svg><span>Texture_01.jpg</span><span>11/09/2018 10:33 AM</span><span>JPG File</span><span>1,169 KB</span></div>
<div class="r"><svg width="16" height="16"><use href="#jpg"/></svg><span>Texture_02.jpg</span><span>11/09/2018 10:33 AM</span><span>JPG File</span><span>1,169 KB</span></div>
<div class="r"><svg width="16" height="16"><use href="#bl"/></svg><span>Thumbs.p3db</span><span>25/07/2020 7:11 PM</span><span>P3DB File</span><span>38 KB</span></div>
<div class="r"><svg width="16" height="16"><use href="#car"/></svg><span>thunderhead.car</span><span>27/03/2014 11:56 AM</span><span>Carrara File</span><span>14 KB</span></div>
<div class="r"><svg width="16" height="16"><use href="#car"/></svg><span>TickTock 1.car</span><span>7/07/2020 10:09 PM</span><span>Carrara File</span><span>1,804,770 KB</span></div>
<div class="r"><svg width="16" height="16"><use href="#car"/></svg><span>timeforspring.car</span><span>13/04/2020 8:37 PM</span><span>Carrara File</span><span>48 KB</span></div>
<div class="r"><svg width="16" height="16"><use href="#car"/></svg><span>timeforspring_w_spring layer.car</span><span>13/04/2020 8:37 PM</span><span>Carrara File</span><span>50 KB</span></div>
<div class="r"><svg width="16" height="16"><use href="#car"/></svg><span>Titanic_2007.car</span><span>13/04/2020 8:37 PM</span><span>Carrara File</span><span>41,789 KB</span></div>
<div class="r"><svg width="16" height="16"><use href="#txt"/></svg><span>To-da-loo 1.txt</span><span>25/09/2019 11:34 PM</span><span>Text Document</span><span>2 KB</span></div>
<div class="r"><svg width="16" height="16"><use href="#car"/></svg><span>Tower 1.car</span><span>11/01/2018 11:46 PM</span><span>Carrara File</span><span>100,245 KB</span></div>
<div class="r s"><svg width="16" height="16"><use href="#car"/></svg><span>Trial Save 1 GME.car</span><span>28/10/2020 1:07 PM</span><span>Carrara File</span><span>1,206,193 KB</span></div>
<div class="r sb"><svg width="16" height="16"><use href="#car"/></svg><span>Trial Save 1.car</span><span>28/10/2020 1:03 PM</span><span>Carrara File</span><span>4,194,334 KB</span></div>
<div class="r"><svg width="16" height="16"><use href="#car"/></svg><span>Updated_Scaling_Example.car</span><span>15/04/2011 3:40 PM</span><span>Carrara File</span><span>1,196 KB</span></div>
<div class="r"><svg width="16" height="16"><use href="#car"/></svg><span>usb.car</span><span>13/04/2020 8:39 PM</span><span>Carrara File</span><span>991 KB</span></div>
<div class="r"><svg width="16" height="16"><use href="#car"/></svg><span>Volcano 1.car</span><span>29/12/2018 3:49 AM</span><span>Carrara File</span><span>12,983 KB</span></div>
<div class="r"><svg width="16" height="16"><use href="#txt"/></svg><span>Wax On Wax Off 1.txt</span><span>4/05/2019 3:03 PM</span><span>Text Document</span><span>3 KB</span></div>
<div class="r"><svg width="16" height="16"><use href="#car"/></svg><span>WaxOnWaxOff 1.car</span><span>7/04/2019 12:21 AM</span><span>Carrara File</span><span>4,194,334 KB</span></div>
<div class="r"><svg width="16" height="16"><use href="#car"/></svg><span>whirlpool .car</span><span>13/04/2020 8:42 PM</span><span>Carrara File</span><span>464 KB</span></div>
<div class="r"><svg width="16" height="16"><use href="#bl"/></svg><span>Wild Seas 1c trial</span><span>29/12/2018 11:30 PM</span><span>File</span><span>1 KB</span></div>
<div class="r"><svg width="16" height="16"><use href="#car"/></svg><span>windowbox.car</span><span>13/04/2020 8:42 PM</span><span>Carrara File</span><span>155 KB</span></div>
<div class="r"><svg width="16" height="16"><use href="#car"/></svg><span>wireframe_sphere.car</span><span>13/04/2020 8:42 PM</span><span>Carrara File</span><span>1,065 KB</span></div>
<div class="r"><svg width="16" height="16"><use href="#car"/></svg><span>yt3000prototype.car</span><span>13/04/2020 8:43 PM</span><span>Carrara File</span><span>40,670 KB</span></div>
</div>
<!-- Explorer scrollbar -->
<div class="a" style="left:813px;top:145px;width:16px;height:797px;background:#f0f0f0"></div>
<div class="a" style="left:813px;top:838px;width:16px;height:89px;background:#cdcdcd"></div>
<svg class="a" style="left:816px;top:151px" width="10" height="788" fill="none"><path d="M1 5l4-4 4 4" stroke="#505050" stroke-width="1.400"/><path d="M1 781l4 4 4-4" stroke="#505050" stroke-width="1.400"/></svg>
<!-- Status -->
<span class="e" style="left:22px;top:948px;color:#333">320 items</span><div class="a" style="left:82px;top:946px;width:1px;height:18px;background:#eee"></div><span class="e" style="left:93px;top:948px;color:#333">2 items selected&nbsp; 5.14 GB</span>
<div class="a" style="left:781px;top:943px;width:22px;height:23px;background:#cce8ff;border:1px solid #3ca4d8"></div>
<svg class="a" style="left:783px;top:945px" width="40" height="20" fill="none"><path d="M3 3h3v3H3zM3 8h3v3H3zM3 13h3v3H3z" stroke="#777"/><path d="M9 4h7M9 9h7M9 14h7" stroke="#555" stroke-dasharray="2 1"/><rect x="24.500" y="2.500" width="13" height="13" fill="#fff" stroke="#aaa"/><rect x="26" y="4" width="10" height="7" fill="#5f8fa8"/><rect x="26" y="8" width="10" height="3" fill="#4a7a58"/></svg>
<div class="a" style="left:7px;top:966px;width:822px;height:23px;background:#f0f0f0;border-top:1px solid #d4d4d4"></div>
<span class="e" style="left:10px;top:972px">2 items selected (Disk free space: 1.65 TB)</span>
<div class="a" style="left:589px;top:967px;width:1px;height:22px;background:#d9d9d9"></div><div class="a" style="left:678px;top:967px;width:1px;height:22px;background:#d9d9d9"></div>
<span class="e" style="left:594px;top:972px">5.14 GB</span>
<svg class="a" style="left:681px;top:970px" width="18" height="18" fill="none"><rect x="1" y="1" width="15" height="11" fill="#2a9be8" stroke="#1a6fb0"/><path d="M1 14h16M3 16h12" stroke="#aab4bb" stroke-width="1.500"/></svg>
<span class="e" style="left:702px;top:972px">Computer</span>
<svg class="a" style="left:818px;top:978px" width="10" height="10" fill="#b8b8b8"><rect x="6" y="0" width="2" height="2"/><rect x="3" y="3" width="2" height="2"/><rect x="6" y="3" width="2" height="2"/><rect x="0" y="6" width="2" height="2"/><rect x="3" y="6" width="2" height="2"/><rect x="6" y="6" width="2" height="2"/></svg>

<!-- bottom strip -->
<div class="a" style="left:0;top:1039px;width:2534px;height:3px;background:#0c0c0c"></div>
<div class="a" style="left:48px;top:1040px;width:344px;height:2px;background:#d6d8dc"></div>

<!-- Properties panel -->
<div class="a" style="left:1920px;top:0;width:8px;height:1039px;background:#69748a"></div>
<div class="a" style="left:1928px;top:3px;width:342px;height:1029px;background:#6f7a8e;border:1px solid #161f2e;border-radius:8px 8px 0 0"></div>
<div class="a" style="left:1928px;top:3px;width:342px;height:23px;background:#2c3a50;border:1px solid #161f2e;border-radius:8px 8px 0 0"></div>
<div class="a" style="left:1935px;top:10px;width:6px;height:6px;border-radius:50%;border:1.500px solid #c4cad4"></div>
<span class="t" style="left:1953px;top:7px;color:#f2f4f7;font-size:14px">Properties</span>
<span class="t" style="left:2008px;top:39px;color:#e5e9ef;font-size:10.700px;width:146px;text-align:center">AlexHairG2MHair : Attributes Set</span>
<div class="btn" style="left:2244px;top:35px;width:17px;height:17px"></div>
<svg class="a" style="left:2246px;top:38px" width="13" height="12"><path d="M2 3h4V0l5 6-5 6V9H2z" fill="#111"/></svg>
<div class="tab on" style="left:1935px;top:63px;width:48px;height:18px">General</div><div class="tab" style="left:1983px;top:64px;width:44px;height:16px;padding-left:4px">Motion</div><div class="tab" style="left:2027px;top:64px;width:64px;height:16px;padding-left:4px">Parameters</div><div class="tab" style="left:2091px;top:64px;width:60px;height:16px;padding-left:3px">Controllers</div><div class="tab" style="left:2151px;top:64px;width:43px;height:16px;padding-left:4px">Mimic</div><div class="tab" style="left:2194px;top:64px;width:45px;height:16px;padding-left:4px">NLA</div>
<div class="a" style="left:1935px;top:80px;width:326px;height:441px;background:#98a3b6;border:1px solid #111a28"></div>
<div class="sec" style="top:81px;height:15px">General</div>
<div class="a" style="left:2258px;top:81px;width:3px;height:440px;background:#e4e6e2"></div><div class="a" style="left:2258px;top:81px;width:3px;height:10px;background:#d8d44a;outline:1px solid #333"></div><div class="a" style="left:2258px;top:508px;width:3px;height:11px;background:#d8d44a;outline:1px solid #333"></div>
<span class="t" style="left:1939px;top:103px">Name:</span>
<div class="a" style="left:2009px;top:101px;width:140px;height:16px;background:#fff;border:1px solid #5b3e20;line-height:15px;padding-left:1px;color:#111">AlexHairG2MHair</div>
<div class="cb" style="left:1940px;top:124px"></div><svg class="a" style="left:1940px;top:121px" width="12" height="13" fill="none"><path d="M2 8l2 3 4-10" stroke="#111" stroke-width="1.400"/></svg><span class="t" style="left:1953px;top:122px">Visible</span>
<div class="cb" style="left:1940px;top:139px"></div><svg class="a" style="left:1940px;top:136px" width="12" height="13" fill="none"><path d="M2 8l2 3 4-10" stroke="#111" stroke-width="1.400"/></svg><span class="t" style="left:1953px;top:137px">Animated</span>
<span class="t" style="left:1939px;top:156px">Shader:</span><span class="t" style="left:2009px;top:156px">Legs</span>
<div class="btn" style="left:2131px;top:154px;width:12px;height:16px"></div><svg class="a" style="left:2133px;top:158px" width="8" height="8" fill="none"><path d="M1 1l3 3 3-3M1 4l3 3 3-3" stroke="#111"/></svg>
<svg class="a" style="left:1942px;top:181px" width="60" height="60"><defs><radialGradient id="sp" cx=".6" cy=".5" r=".65"><stop offset="0" stop-color="#d6ad95"/><stop offset=".75" stop-color="#b38c78"/><stop offset="1" stop-color="#4a3b33"/></radialGradient></defs><ellipse cx="29" cy="30" rx="28.500" ry="28.500" fill="url(#sp)"/><path d="M2 46L6 38L8 26L14 8L20 14L20 22L12 28L7 40ZM29 25L57 17L57 21L30 27ZM16 5L30 2L33 5L20 8Z" fill="#17120f"/></svg>
<div class="btn" style="left:2012px;top:177px;width:132px;height:17px;line-height:15px">Edit</div>
<div class="btn" style="left:2012px;top:201px;width:132px;height:17px;line-height:15px">Preset</div>
<div class="btn" style="left:2012px;top:224px;width:132px;height:17px;line-height:15px">Apply to children</div>
<div class="sec" style="top:254px;height:16px">View</div>
<div class="cb" style="left:1940px;top:279px"></div><svg class="a" style="left:1940px;top:276px" width="12" height="13" fill="none"><path d="M2 8l2 3 4-10" stroke="#111" stroke-width="1.400"/></svg><span class="t" style="left:1953px;top:277px">Show Object in 3D View</span>
<div class="sec" style="top:297px;height:16px">Animation Group</div>
<div class="cb" style="left:1940px;top:322px;background:#7f96b8"></div><span class="t" style="left:1953px;top:320px">Control Shaders</span>
<span class="t" style="left:1939px;top:343px">Fit To</span>
<div class="btn" style="left:1972px;top:340px;width:181px;height:18px;line-height:17px;text-align:left;padding-left:3px">Genesis 2 Male</div><svg class="a" style="left:2143px;top:345px" width="8" height="9" fill="none"><path d="M1 1l3 3 3-3M1 4l3 3 3-3" stroke="#111"/></svg>
<!-- splitter -->
<div class="a" style="left:1934px;top:528px;width:336px;height:3px;border-top:1px solid #111a28;border-bottom:1px solid #111a28;background:#b8c0cc"></div>
<div class="a" style="left:2076px;top:525px;width:49px;height:11px;border-radius:6px;background:linear-gradient(#6a9ccd,#3f72ab);border:1px solid #1a3055"></div><div class="a" style="left:2096px;top:530px;width:9px;height:2px;background:#cfe6f7"></div>
<!-- lower tabs -->
<div class="tab on" style="left:1935px;top:542px;width:55px;height:18px">Instances</div><div class="tab" style="left:1990px;top:543px;width:45px;height:16px;padding-left:4px">Objects</div><div class="tab" style="left:2035px;top:543px;width:49px;height:16px;padding-left:4px">Shaders</div><div class="tab" style="left:2084px;top:543px;width:45px;height:16px;padding-left:4px">Sounds</div><div class="tab" style="left:2129px;top:543px;width:45px;height:16px;padding-left:4px">Clips</div>
<div class="a" style="left:1935px;top:559px;width:326px;height:465px;border:1px solid #111a28;background:#98a3b6"></div>
<span class="t" style="left:1967px;top:569px;font-size:11px">Find:</span>
<div class="a" style="left:1990px;top:565px;width:183px;height:20px;background:#fff;border:1px solid #5b3e20"></div>
<div class="btn" style="left:2179px;top:567px;width:79px;height:16px;line-height:16px;text-align:left;padding-left:3px;color:#e7ecf3">All</div><svg class="a" style="left:2248px;top:570px" width="8" height="9" fill="none"><path d="M1 1l3 3 3-3M1 4l3 3 3-3" stroke="#eee"/></svg>
<div class="a" style="left:1936px;top:591px;width:323px;height:425px;overflow:hidden">
<div style="margin-top:-9px">
<div class="p" style="padding-left:101px">Left Collar</div>
<div class="p" style="padding-left:114px">Left Shoulder</div>
<div class="p" style="padding-left:100px">Right Pectoral</div>
<div class="p" style="padding-left:100px">Left Pectoral</div>
<div class="p y" style="padding-left:44px">AlexHairG2MHair</div>
<div class="p y" style="padding-left:58px">Actor</div>
<div class="p y" style="padding-left:58px">Hip</div>
<div class="p y" style="padding-left:72px">Pelvis</div>
<div class="p y" style="padding-left:72px">Abdomen</div>
<div class="p y" style="padding-left:86px">Abdomen 2</div>
<div class="p y" style="padding-left:100px">Chest</div>
<div class="p y" style="padding-left:114px">Neck</div>
<div class="p y" style="padding-left:128px">Head</div>
<div class="p y" style="padding-left:142px">lCheek</div>
<div class="p y" style="padding-left:142px">rCheek</div>
<div class="p y" style="padding-left:142px">lFront</div>
<div class="p y" style="padding-left:142px">rFront</div>
<div class="p y" style="padding-left:142px">hairback</div>
<div class="p y" style="padding-left:142px">lBack</div>
<div class="p y" style="padding-left:142px">rBack</div>
<div class="p y" style="padding-left:142px">lHairSide</div>
<div class="p y" style="padding-left:142px">rHairSide</div>
<div class="p y" style="padding-left:142px">hair</div>
<div class="p y" style="padding-left:114px">Right Collar</div>
<div class="p y" style="padding-left:128px">Right Shoulder</div>
<div class="p y" style="padding-left:114px">Left Collar</div>
<div class="p y" style="padding-left:128px">Left Shoulder</div>
<div class="p y"></div>
</div></div>
<svg class="a" style="left:0;top:0" width="2534" height="1042" fill="none">
<g stroke="#111" stroke-width="1"><path d="M1960.500 591V653.500H1965"/><path d="M2016.500 591V637.500H2031M2016.500 621.500H2031"/><path d="M2030.500 598V605.500H2045"/>
<path d="M1974.500 658V685.500H1979M1974.500 669.500H1989"/><path d="M1988.500 690V717.500H1993M1988.500 701.500H2003"/><path d="M2002.500 722V733.500H2007"/><path d="M2016.500 738V749.500H2021"/>
<path d="M2030.500 755V1016M2030.500 765.500H2035M2030.500 957.500H2035M2030.500 989.500H2035"/><path d="M2044.500 771V781.500H2049M2044.500 963V973.500H2059M2044.500 995V1005.500H2059"/>
<path d="M2058.500 787V941.500H2073M2058.500 797.500H2073M2058.500 813.500H2073M2058.500 829.500H2073M2058.500 845.500H2073M2058.500 861.500H2073M2058.500 877.500H2073M2058.500 893.500H2073M2058.500 909.500H2073M2058.500 925.500H2073"/></g>
<g fill="#fff"><path d="M1968 651h10l-5 6zM1982 683h10l-5 6zM1996 715h10l-5 6zM2010 731h10l-5 6zM2024 747h10l-5 6zM2038 763h10l-5 6zM2052 779h10l-5 6zM2038 955h10l-5 6zM2038 987h10l-5 6z"/></g>
</svg>
<!-- lower scroll -->
<div class="a" style="left:2259px;top:591px;width:4px;height:426px;background:#e4e6e2;border-left:1px solid #333"></div>
<div class="a" style="left:2259px;top:591px;width:4px;height:10px;background:#d8d44a;outline:1px solid #333"></div>
<div class="a" style="left:2259px;top:1006px;width:4px;height:11px;background:#d8d44a;outline:1px solid #333"></div>
<div class="a" style="left:2258px;top:933px;width:8px;height:58px;background:linear-gradient(90deg,#4a7cb5,#35649c);border:1px solid #1a3055;border-radius:3px"></div>
<div class="a" style="left:1936px;top:1016px;width:323px;height:7px;background:#e4e6e2;border-top:1px solid #222"></div>
<div class="a" style="left:1936px;top:1017px;width:12px;height:6px;background:#d8d44a;outline:1px solid #333"></div>
<div class="a" style="left:2247px;top:1017px;width:12px;height:6px;background:#d8d44a;outline:1px solid #333"></div>
<div class="a" style="left:1948px;top:1016px;width:233px;height:8px;background:linear-gradient(#6a9ccd,#3f72ab);border:1px solid #1a3055;border-radius:3px"></div>
<div class="a" style="left:1920px;top:1032px;width:614px;height:7px;background:#7b8699"></div>

<!-- Sequencer panel -->
<div class="a" style="left:2271px;top:0;width:263px;height:1032px;background:#6f7a8e;border-left:1px solid #161f2e;border-bottom:1px solid #161f2e"></div>
<div class="a" style="left:2272px;top:0;width:262px;height:23px;background:#2c3a50;border-bottom:1px solid #161f2e;border-radius:8px 0 0 0"></div>
<div class="a" style="left:2279px;top:10px;width:7px;height:7px;border-radius:50%;border:1.500px solid #c4cad4;margin-top:-1px"></div>
<span class="t" style="left:2297px;top:4px;color:#dfe3ea;font-size:14.500px">Sequencer</span>
<div class="btn" style="left:2278px;top:29px;width:61px;height:16px;line-height:15px;color:#e7ecf3;border-radius:1px;background:linear-gradient(#3f6ea5,#356296);font-size:11px">Animate</div>
<div class="a" style="left:2348px;top:29px;width:102px;height:16px;background:#3a6a9f;border:1px solid #1a3055"></div>
<div class="a" style="left:2459px;top:29px;width:17px;height:16px;background:#3a6a9f;border:1px solid #1a3055"></div>
<div class="a" style="left:2484px;top:29px;width:50px;height:16px;background:#3a6a9f;border:1px solid #1a3055"></div>
<svg class="a" style="left:2348px;top:29px" width="186" height="16" fill="#fff">
<path d="M4 3h2v10H4zM13 3v10l-6-5zM19 8l6-5v10zM26 8l6-5v10z"/><rect x="37" y="4" width="9" height="8"/><path d="M55 3l7 5-7 5zM71 3l6 5-6 5zM78 3l6 5-6 5zM88 3l6 5v-5h2v10h-2V8l-6 5z"/>
<rect x="115" y="5" width="10" height="8" fill="none" stroke="#fff" stroke-width="1.300"/><rect x="118" y="2" width="4" height="5"/>
<path d="M150 8l6-5v10z"/><circle cx="159" cy="8" r="3" fill="none" stroke="#fff" stroke-width="1.300"/><path d="M162 8h8v3h-1v-2h-7z"/><path d="M176 4h8v1h-8zM177 6h6v7h-6z"/>
</svg>
<!-- side tabs -->
<div class="a" style="left:2282px;top:53px;width:16px;height:60px;background:#6f7a8e;border:1px solid #161f2e;border-right:0;border-radius:6px 0 0 6px"></div>
<div class="a" style="left:2282px;top:113px;width:17px;height:50px;background:#8490a4;border:1px solid #161f2e;border-right:0;border-radius:0 0 0 6px;z-index:2"></div>
<span class="t" style="left:2256px;top:76px;width:68px;text-align:center;transform:rotate(-90deg);color:#1c2431;font-size:11px;z-index:3">Sequencer</span>
<span class="t" style="left:2256px;top:131px;width:68px;text-align:center;transform:rotate(-90deg);color:#1c2431;font-size:11px;z-index:3">Browser</span>
<!-- browser frame -->
<div class="a" style="left:2298px;top:53px;width:236px;height:967px;border-left:1px solid #161f2e;border-bottom:1px solid #161f2e;background:#6f7a8e"></div>
<div class="a" style="left:2306px;top:78px;width:228px;height:942px;border-left:1px solid #161f2e;background:#8591a6"></div>
<div class="tab" style="left:2306px;top:62px;width:47px;height:16px;padding-left:6px;background:#8591a6;color:#eef1f5">Scenes</div><div class="tab" style="left:2353px;top:62px;width:45px;height:16px;padding-left:4px;background:#8591a6;color:#eef1f5">Objects</div><div class="tab" style="left:2398px;top:62px;width:49px;height:16px;padding-left:4px;background:#8591a6;color:#eef1f5">Shaders</div><div class="tab" style="left:2447px;top:62px;width:44px;height:16px;padding-left:4px;background:#8591a6;color:#eef1f5">Clip</div><div class="tab" style="left:2491px;top:62px;width:43px;height:16px;padding-left:4px;background:#8591a6;color:#eef1f5;border-right:0">Misc.</div>
<div class="a" style="left:2313px;top:85px;width:5px;height:923px;background:#98a3b6;border-left:1px solid #161f2e"></div>
<div class="a" style="left:2313px;top:544px;width:5px;height:17px;background:#d6d36b"></div>
<div class="a" style="left:2318px;top:85px;width:147px;height:923px;overflow:hidden;background:#6f7a8e">
<div class="q">Surf's Up Outfit and I</div><div class="q">tentman</div><div class="q">The Singlet</div><div class="q">Time for School</div><div class="q">TOA</div><div class="q">Totem Outfit</div><div class="q">Trendy College</div><div class="q">Tribal Warrior</div><div class="q">Urban Metro Outfit</div><div class="q">V3D</div><div class="q">Viking</div><div class="q">Viking Outfit</div><div class="q">Vintage Aviator</div><div class="q">Voyager</div><div class="q">Vrakaros Armor</div><div class="q">War Mage</div><div class="q">Western Outlaw</div><div class="q">Wind Chill</div><div class="q">Witch Doctor</div><div class="q">WolfKing</div><div class="q">Work Clothes</div><div class="q">Wukong Outfit</div><div class="q">Xena</div><div class="q">Yakuza Outfit</div><div class="q x">Expressions</div><div class="q x d">Hair</div><div class="q n">!_Conversions</div><div class="q c">Alex Hair</div><div class="q">AMLM</div><div class="q">Ancient Combat Hair</div><div class="q">AprilYSH</div><div class="q">Basic Hair</div><div class="q">Bold Hair</div><div class="q">Brit Hair</div><div class="q">Casual Long Hair</div><div class="q">Cody Hair</div><div class="q">DA Mohawk</div><div class="q">Drifter Hair</div><div class="q">Finlay Hair</div><div class="q">Fisty</div><div class="q">Fraser Hair</div><div class="q">Funky Hair</div><div class="q">FWArt</div><div class="q">G2Male_Beards-Latin</div><div class="q">G2Male_Eyebrows-Latin</div><div class="q">Goldtassel</div><div class="q">Jake Hair</div><div class="q">Kami Hair</div><div class="q">Kaylum Hair</div><div class="q">Kung Fu Hair</div><div class="q">Laticis Imagery</div><div class="q">Mad Hair</div><div class="q">Mathew Hair</div><div class="q">MEC4D</div>
</div>
<svg class="a" style="left:2318px;top:85px" width="147" height="923" fill="none" stroke="#cdd3dc"><path d="M.500 0V923M5.500 0V923M15.500 0V923M25.500 0V923"/><path d="M36.500 0V391M36.500 436V923"/></svg>
<div class="a" style="left:2465px;top:85px;width:5px;height:928px;background:#e4e6e2;border-left:1px solid #222;border-right:1px solid #555"></div>
<div class="a" style="left:2466px;top:85px;width:4px;height:12px;background:#d8d44a"></div><div class="a" style="left:2466px;top:1002px;width:4px;height:11px;background:#d8d44a"></div>
<div class="a" style="left:2313px;top:1008px;width:152px;height:5px;background:#e4e6e2;border-top:1px solid #222;border-bottom:1px solid #222"></div>
<div class="a" style="left:2314px;top:1009px;width:11px;height:3px;background:#d8d44a"></div><div class="a" style="left:2454px;top:1009px;width:11px;height:3px;background:#d8d44a"></div>
<div class="a" style="left:2473px;top:78px;width:4px;height:935px;background:#06080c"></div>
<div class="a" style="left:2477px;top:78px;width:57px;height:935px;background:#717c8f;border-bottom:1px solid #161f2e"></div>
<svg class="a" style="left:2477px;top:85px" width="49" height="49"><rect x=".750" y=".750" width="47" height="47" fill="#8a95a8" stroke="#d6d36b" stroke-width="1.500"/><path d="M8 44Q3 30 6 17Q10 3 25 3Q41 3 43 18Q46 32 41 42L33 40L22 44Z" fill="#8a6f42"/><path d="M9 20Q14 12 24 15Q24 25 28 32Q26 41 19 42Q12 40 9 30Z" fill="#c09a82"/><path d="M15 39h14v8H15z" fill="#a07e68"/><path d="M25 5Q18 6 11 17M30 6Q38 12 40 30M33 15Q35 28 32 38M28 10Q31 22 30 34M37 12Q42 24 39 38" stroke="#c2a877" stroke-width="1.600" fill="none"/></svg>
<span class="t" style="left:2481px;top:133px;color:#d6d36b;font-size:11px">AlexHair</span>
<div class="a" style="left:2270px;top:1029px;width:264px;height:1px;background:#161f2e"></div>
</div></body></html>
